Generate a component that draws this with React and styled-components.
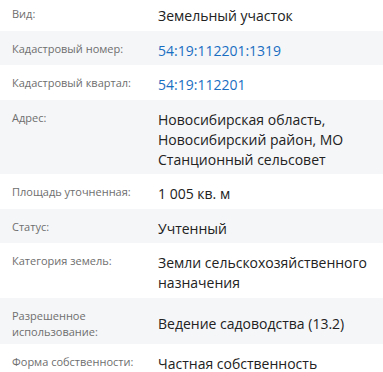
import styled, {createGlobalStyle} from "styled-components";

const GlobalStyle = createGlobalStyle`
  html, body {
    margin: 0;
    padding: 0;
    background: #ffffff;
    overflow: hidden;
  }
  body {
    font-family: "Open Sans", "Liberation Sans", sans-serif;
  }
`

const List = styled.div`
  display: flex;
  flex-direction: column;
  margin-top: -4px;
  width: 383px;
`

const Row = styled.div`
  display: flex;
  flex-direction: row;
  padding: 10px 12px 4.5px 12px;
  background-color: ${props => props.shaded ? `#f5f6f8` : `#ffffff`};
`

const Label = styled.div`
  flex: 0 0 130px;
  margin-right: 16px;
  align-self: flex-start;
  font-size: 11px;
  line-height: 16px;
  color: #6e6e6e;
`

const Value = styled.div`
  flex: 1;
  align-self: center;
  font-size: 14px;
  line-height: 20px;
  color: ${props => props.link ? `#1a6ec2` : `#222222`};
  cursor: ${props => props.link ? `pointer` : `default`};
`

const fields = [
	{label: "Вид:", value: "Земельный участок"},
	{label: "Кадастровый номер:", value: "54:19:112201:1319", link: true},
	{label: "Кадастровый квартал:", value: "54:19:112201", link: true},
	{label: "Адрес:", value: "Новосибирская область, Новосибирский район, МО Станционный сельсовет"},
	{label: "Площадь уточненная:", value: "1 005 кв. м"},
	{label: "Статус:", value: "Учтенный"},
	{label: "Категория земель:", value: "Земли сельскохозяйственного назначения"},
	{label: "Разрешенное использование:", value: "Ведение садоводства (13.2)"},
	{label: "Форма собственности:", value: "Частная собственность"},
]

export default function App() {
	return (<>
		<GlobalStyle/>
		<List>
			{fields.map((f, i) => (
				<Row key={f.label} shaded={i % 2 === 1}>
					<Label>{f.label}</Label>
					<Value link={f.link}>{f.value}</Value>
				</Row>
			))}
		</List>
	</>)
}
